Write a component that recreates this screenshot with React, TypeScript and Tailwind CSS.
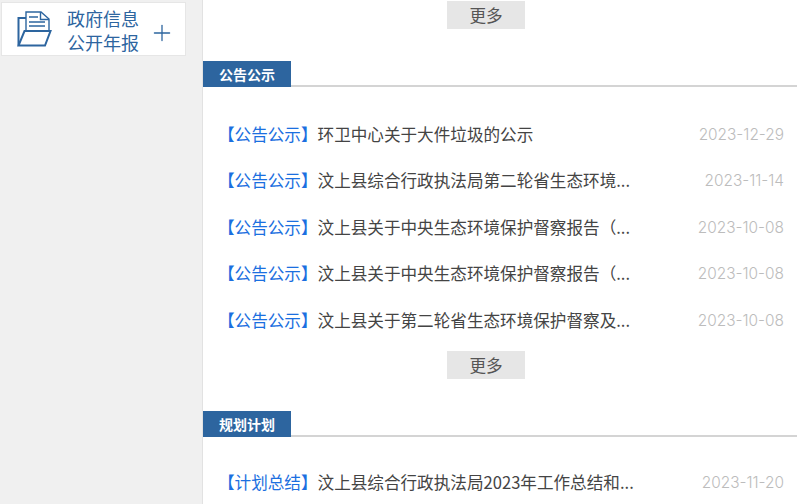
import React from 'react';
import { Plus } from 'lucide-react';

type Row = { tag: string; title: string; date: string };

const notices: Row[] = [
    { tag: '公告公示', title: '环卫中心关于大件垃圾的公示', date: '2023-12-29' },
    { tag: '公告公示', title: '汶上县综合行政执法局第二轮省生态环境...', date: '2023-11-14' },
    { tag: '公告公示', title: '汶上县关于中央生态环境保护督察报告（...', date: '2023-10-08' },
    { tag: '公告公示', title: '汶上县关于中央生态环境保护督察报告（...', date: '2023-10-08' },
    { tag: '公告公示', title: '汶上县关于第二轮省生态环境保护督察及...', date: '2023-10-08' },
];

const plans: Row[] = [
    { tag: '计划总结', title: '汶上县综合行政执法局2023年工作总结和...', date: '2023-11-20' },
];

const FolderIcon = () => (
    <svg width="36" height="38" viewBox="0 0 36 38" fill="none" stroke="#2d659f" strokeWidth="1.4">
        <path d="M9 21V2H24L32 9V21" />
        <path d="M23.5 2V9.5H32" />
        <path d="M12 7H21M12 12H28M12 16H28" />
        <path d="M9 8H1.5V35.5" strokeWidth="2" />
        <path d="M7.5 21H33.5L28 35.5H1.5Z" strokeWidth="2" />
    </svg>
);

const MoreButton = () => (
    <div className="flex justify-center mr-[31px]">
        <div className="w-[78px] h-[28px] bg-[#e6e6e6] flex items-center justify-center text-[16.6px] text-[#555]">更多</div>
    </div>
);

const SectionTitle = ({ text }: { text: string }) => (
    <div className="h-[26px] border-b-2 border-[#d4d4d4] flex items-end mr-[3px]">
        <div className="w-[88px] h-[26px] -mb-[2px] bg-[#2d659f] text-white text-[14px] font-bold flex items-center justify-center">{text}</div>
    </div>
);

const NewsRow = ({ row }: { row: Row }) => (
    <div className="h-[46.5px] flex items-center justify-between pr-[16px] text-[16.6px]">
        <div className="whitespace-nowrap">
            <span className="text-[#1b6fe0]">【{row.tag}】</span>
            <span className="text-[#444]">{row.title}</span>
        </div>
        <span className="text-[#bcbcbc] text-[15.4px] font-light font-['Inter','Noto_Sans_CJK_SC',sans-serif]">{row.date}</span>
    </div>
);

const App: React.FC = () => {
    return (
        <div className="w-[800px] h-[504px] overflow-hidden flex bg-[#f0f0f0] font-['Noto_Sans_CJK_SC','Noto_Sans',sans-serif]">
            <div className="w-[202px] shrink-0 pt-[2px] pl-[1px]">
                <div className="w-[185px] h-[54px] box-border bg-white border border-[#e6e6e6] flex items-center pl-[15px]">
                    <FolderIcon />
                    <div className="ml-[14px] mt-[2px] text-[18px] leading-[24px] text-[#2d659f]">
                        <div>政府信息</div>
                        <div>公开年报</div>
                    </div>
                    <Plus size={26} strokeWidth={1.2} color="#2d659f" className="ml-[10px] mt-[8px]" />
                </div>
            </div>
            <div className="flex-1 bg-white border-l border-[#e2e2e2]">
                <div className="pt-[1px]"><MoreButton /></div>
                <div className="mt-[32px]"><SectionTitle text="公告公示" /></div>
                <div className="pt-[24px] pl-[15px]">
                    {notices.map((row, i) => <NewsRow key={i} row={row} />)}
                </div>
                <div className="mt-[7.5px]"><MoreButton /></div>
                <div className="mt-[32px]"><SectionTitle text="规划计划" /></div>
                <div className="pt-[22.5px] pl-[15px]">
                    {plans.map((row, i) => <NewsRow key={i} row={row} />)}
                </div>
            </div>
        </div>
    );
};

export default App;
